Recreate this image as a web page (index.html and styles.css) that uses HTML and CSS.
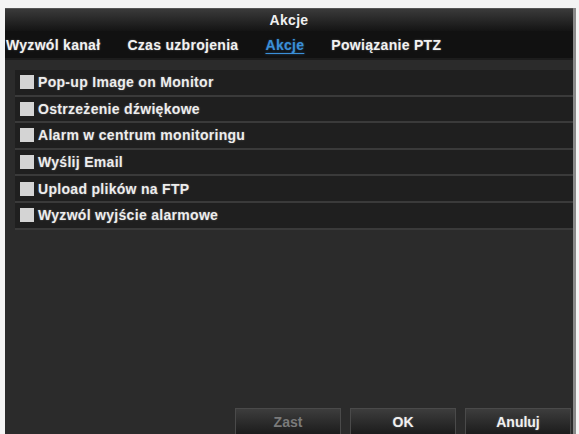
FILE: index.html
```html
<!DOCTYPE html>
<html lang="pl">
<head>
    <meta charset="UTF-8">
    <title>Akcje</title>
    <link rel="stylesheet" href="styles.css">
</head>
<body>
    <div class="window">
        <div class="titlebar">Akcje</div>

        <div class="tabs">
            <span class="tab">Wyzwól kanał</span>
            <span class="tab">Czas uzbrojenia</span>
            <span class="tab active">Akcje</span>
            <span class="tab">Powiązanie PTZ</span>
        </div>

        <div class="content">
            <div class="list">
                <div class="row"><span class="check"></span>Pop-up Image on Monitor</div>
                <div class="row"><span class="check"></span>Ostrzeżenie dźwiękowe</div>
                <div class="row"><span class="check"></span>Alarm w centrum monitoringu</div>
                <div class="row"><span class="check"></span>Wyślij Email</div>
                <div class="row"><span class="check"></span>Upload plików na FTP</div>
                <div class="row"><span class="check"></span>Wyzwól wyjście alarmowe</div>
            </div>

            <div class="buttons">
                <button class="btn disabled">Zast</button>
                <button class="btn">OK</button>
                <button class="btn">Anuluj</button>
            </div>
        </div>
    </div>
</body>
</html>
```

FILE: styles.css
```css
* {
    margin: 0;
    padding: 0;
    box-sizing: border-box;
    font-family: 'Liberation Sans', Arial, sans-serif;
}

body {
    background-color: #f4f4f4;
    width: 579px;
    height: 434px;
    overflow: hidden;
}

.window {
    margin: 8px 3px 0 5px;
    height: 426px;
    background-color: #2b2b2b;
    border-right: 3px solid #8a8a8a;
    display: flex;
    flex-direction: column;
}

.titlebar {
    height: 23px;
    line-height: 23px;
    text-align: center;
    color: #f0f0f0;
    font-size: 14px;
    font-weight: bold;
    letter-spacing: 0.3px;
    background: linear-gradient(#3a3a3a, #141414);
    border-top: 1px solid #555;
}

.tabs {
    height: 29px;
    display: flex;
    align-items: center;
    background-color: #111;
    border-bottom: 2px solid #1d1d1d;
}

.tab {
    color: #f2f2f2;
    font-size: 14px;
    font-weight: bold;
    letter-spacing: 0.3px;
    text-shadow: 0 0 2px rgba(255, 255, 255, 0.35);
    margin-right: 27px;
}

.tab:first-child {
    margin-left: 1px;
}

.tab.active {
    color: #3a8fd8;
    text-decoration: underline;
    text-underline-offset: 3px;
    text-shadow: 0 0 2px rgba(60, 140, 220, 0.5);
}

.content {
    flex: 1;
    display: flex;
    flex-direction: column;
    justify-content: space-between;
    padding: 10px 0 0 10px;
}

.list {
    display: flex;
    flex-direction: column;
}

.row {
    height: 26.6px;
    display: flex;
    align-items: center;
    background-color: #1f1f1f;
    border-bottom: 2px solid #3a3a3a;
    color: #ededed;
    font-size: 14px;
    font-weight: bold;
    letter-spacing: 0.3px;
    text-shadow: 0 0 2px rgba(255, 255, 255, 0.3);
}

.check {
    width: 14px;
    height: 14px;
    background-color: #d4d4d4;
    margin: 0 4px 0 5px;
    flex-shrink: 0;
}

.buttons {
    display: flex;
    justify-content: flex-end;
    gap: 9px;
    padding-right: 2px;
}

.btn {
    width: 106px;
    height: 26px;
    background: linear-gradient(#3d3d3d, #1c1c1c);
    border: 1px solid #4a4a4a;
    border-bottom: none;
    color: #f0f0f0;
    font-size: 14px;
    font-weight: bold;
    text-shadow: 0 0 2px rgba(255, 255, 255, 0.3);
}

.btn.disabled {
    color: #7a7a7a;
    text-shadow: none;
}
```
